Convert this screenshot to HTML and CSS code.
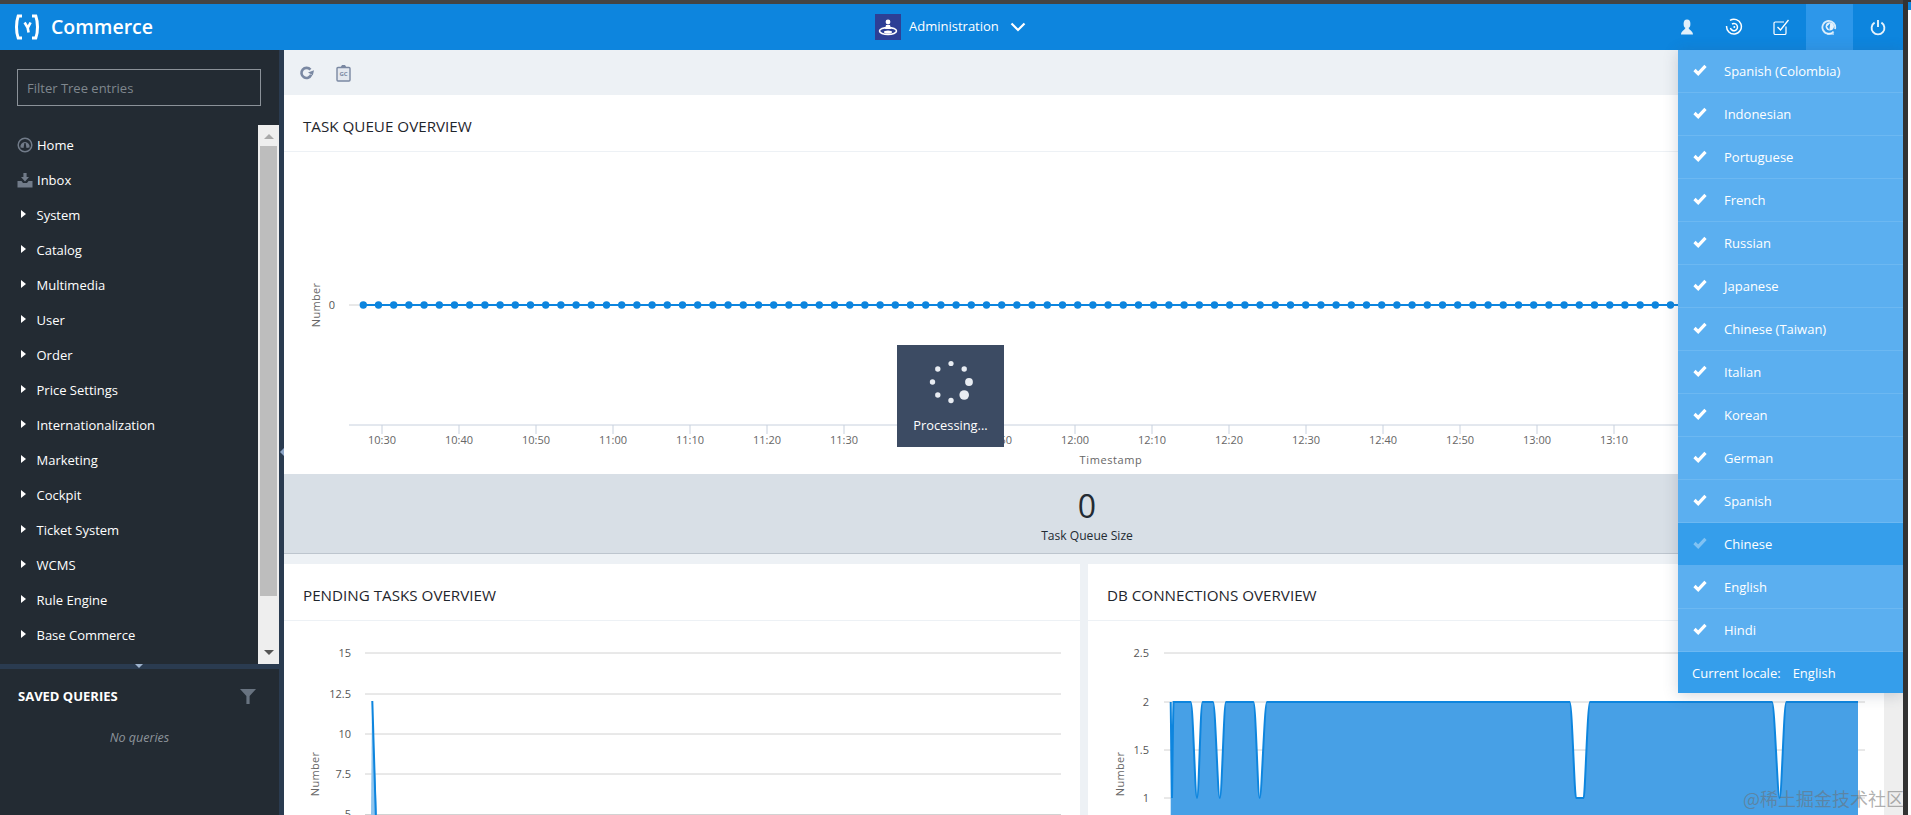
FILE: index.html
```html
<!DOCTYPE html>
<html lang="en">
<head>
<meta charset="utf-8">
<title>Commerce Backoffice</title>
<link rel="stylesheet" href="styles.css">
</head>
<body>
<svg class="defs" width="0" height="0" aria-hidden="true">
  <symbol id="tick" viewBox="0 0 14 12"><path d="M1.5 6 L5.2 9.6 L12.5 1.8" fill="none" stroke="currentColor" stroke-width="3.2"/></symbol>
</svg>
<div class="window">
  <div class="frame-top"></div>
  <header class="header">
    <div class="brand">
      <svg class="logo" width="24" height="26" viewBox="0 0 24 26"><path d="M7 2 H3.2 C1.8 6 1.5 9 1.5 13 C1.5 17 1.8 20.5 3.2 24 H7" fill="none" stroke="#fff" stroke-width="3"/><path d="M17 2 H20.8 C22.2 6 22.5 9 22.5 13 C22.5 17 22.2 20.5 20.8 24 H17" fill="none" stroke="#fff" stroke-width="3"/><path d="M9.6 8.5 L12.6 13.5 L13.6 18.5 M15.6 8.5 L13 13.5" fill="none" stroke="#fff" stroke-width="2.6"/></svg>
      <span class="brand-name">Commerce</span>
    </div>
    <div class="perspective">
      <svg class="persp-icon" width="26" height="26" viewBox="0 0 26 26"><rect width="26" height="26" fill="#2d3f95"/><circle cx="13" cy="8" r="2.4" fill="#fff"/><path d="M11 11 H15 L16 15 H10 Z" fill="#fff"/><ellipse cx="13" cy="17" rx="8.5" ry="3.4" fill="none" stroke="#fff" stroke-width="1.6"/><ellipse cx="13" cy="18" rx="4" ry="1.5" fill="#fff"/></svg>
      <span class="persp-name">Administration</span>
      <svg width="16" height="10" viewBox="0 0 16 10"><path d="M1.5 1.5 L8 8 L14.5 1.5" fill="none" stroke="#fff" stroke-width="2.2"/></svg>
    </div>
    <nav class="head-tools">
      <div class="tool"><svg width="16" height="16" viewBox="0 0 16 16"><ellipse cx="8" cy="5" rx="3.4" ry="4.4" fill="#fff" opacity=".88"/><path d="M2 15.5 C2 12.5 5 11.5 6.5 9 H9.5 C11 11.5 14 12.5 14 15.5 Z" fill="#fff" opacity=".88"/></svg></div>
      <div class="tool"><svg width="18" height="18" viewBox="0 0 18 18"><path d="M5 2.4 A7.4 7.4 0 1 1 1.6 8" fill="none" stroke="#fff" stroke-width="1.5"/><path d="M7 6 A3.6 3.6 0 1 1 5.4 10" fill="none" stroke="#fff" stroke-width="1.5"/><circle cx="9.3" cy="9" r="1" fill="#fff"/></svg></div>
      <div class="tool"><svg width="17" height="17" viewBox="0 0 17 17"><path d="M13 7.5 V14.2 A1.3 1.3 0 0 1 11.7 15.5 H2.3 A1.3 1.3 0 0 1 1 14.2 V4.3 A1.3 1.3 0 0 1 2.3 3 H11" fill="none" stroke="#fff" stroke-width="1.2"/><path d="M4.5 8 L7.5 11 L15.5 1" fill="none" stroke="#fff" stroke-width="1.3"/></svg></div>
      <div class="tool tool-active"><svg width="16" height="16" viewBox="0 0 16 16"><path d="M12.6 12.6 A6.4 6.4 0 1 1 14 10" fill="none" stroke="#fff" stroke-opacity=".82" stroke-width="1.8"/><circle cx="8.8" cy="7.4" r="4.2" fill="#fff" opacity=".88"/><path d="M9.2 4.2 L6 7.6 L8.4 11 Z" fill="#2d97ea"/><path d="M6 15 H13" stroke="#fff" stroke-opacity=".82" stroke-width="1.2"/></svg></div>
      <div class="tool tool-power"><svg width="16" height="17" viewBox="0 0 16 17"><path d="M4.6 3.6 A6.4 6.4 0 1 0 11.4 3.6" fill="none" stroke="#fff" stroke-opacity=".9" stroke-width="1.9"/><path d="M8 1 V8" stroke="#fff" stroke-opacity=".9" stroke-width="1.9"/></svg></div>
    </nav>
  </header>

  <div class="workspace">
    <aside class="sidebar">
      <div class="filter-wrap"><div class="filter-box">Filter Tree entries</div></div>
      <div class="tree-wrap">
        <ul class="tree">
          <li class="tree-item tree-root"><svg class="tree-icon" width="16" height="16" viewBox="0 0 16 16"><circle cx="8" cy="8" r="6.8" fill="none" stroke="#717b89" stroke-width="1.5"/><path d="M3.5 10.5 A4.6 4.6 0 1 1 12.5 10.5 L9.5 11 L8.6 6 H7.4 L6.5 11 Z" fill="#717b89"/></svg>Home</li>
          <li class="tree-item tree-root"><svg class="tree-icon" width="16" height="16" viewBox="0 0 16 16"><path d="M0.5 9 H4.5 L6 11 H10 L11.5 9 H15.5 V15.5 H0.5 Z" fill="#717b89"/><path d="M6.4 1 H9.6 V5 H12 L8 9.5 L4 5 H6.4 Z" fill="#717b89"/></svg>Inbox</li>
          <li class="tree-item"><span class="caret"></span>System</li>
          <li class="tree-item"><span class="caret"></span>Catalog</li>
          <li class="tree-item"><span class="caret"></span>Multimedia</li>
          <li class="tree-item"><span class="caret"></span>User</li>
          <li class="tree-item"><span class="caret"></span>Order</li>
          <li class="tree-item"><span class="caret"></span>Price Settings</li>
          <li class="tree-item"><span class="caret"></span>Internationalization</li>
          <li class="tree-item"><span class="caret"></span>Marketing</li>
          <li class="tree-item"><span class="caret"></span>Cockpit</li>
          <li class="tree-item"><span class="caret"></span>Ticket System</li>
          <li class="tree-item"><span class="caret"></span>WCMS</li>
          <li class="tree-item"><span class="caret"></span>Rule Engine</li>
          <li class="tree-item"><span class="caret"></span>Base Commerce</li>
        </ul>
        <div class="tree-scroll">
          <span class="arrow-up"></span>
          <span class="thumb"></span>
          <span class="arrow-down"></span>
        </div>
      </div>
      <div class="hsplit"><span class="hsplit-grip"></span></div>
      <div class="queries">
        <div class="queries-head">
          <span class="queries-title">SAVED QUERIES</span>
          <svg width="16" height="15" viewBox="0 0 16 15"><path d="M0 0 H16 L9.6 7 V15 H6.4 V7 Z" fill="#687380"/></svg>
        </div>
        <p class="queries-empty">No queries</p>
      </div>
    </aside>
    <div class="vsplit"><span class="vsplit-grip"></span></div>
    <main class="main">
      <div class="content">
        <div class="toolbar">
          <svg width="15" height="15" viewBox="0 0 16 16"><path d="M13 10.5 A5.4 5.4 0 1 1 12.2 5" fill="none" stroke="#7a88a2" stroke-width="2.8"/><path d="M16 5.5 L14.8 10.8 L9.6 8 Z" fill="#7a88a2"/></svg>
          <svg width="15" height="18" viewBox="0 0 15 18"><rect x="1" y="3.5" width="13" height="13.5" rx="1" fill="#e4e8ef" stroke="#7a88a2" stroke-width="1.4"/><path d="M4.5 3.5 L6 1 H9 L10.5 3.5 Z" fill="#7a88a2"/><text x="7.5" y="12.4" class="gc">GC</text></svg>
        </div>

        <section class="card">
          <h2 class="card-title">TASK QUEUE OVERVIEW</h2>
          <svg class="chart chart-top" viewBox="284 152 1600 322" width="1600" height="322">
            <path d="M349 305 H360" class="grid"/>
            <text x="332" y="309" class="tick-y">0</text>
            <text class="axis-name" transform="translate(320 305) rotate(-90)">Number</text>
            <path d="M363 305 H1700" class="series"/>
            <path d="M363.3 305 H1700" class="series-dots"/>
            <path d="M349 425 H1700" class="axis"/>
            <path d="M382 425 v9 M459 425 v9 M536 425 v9 M613 425 v9 M690 425 v9 M767 425 v9 M844 425 v9 M921 425 v9 M998 425 v9 M1075 425 v9 M1152 425 v9 M1229 425 v9 M1306 425 v9 M1383 425 v9 M1460 425 v9 M1537 425 v9 M1614 425 v9" class="axis"/>
            <text y="444" class="tick-x">
              <tspan x="382">10:30</tspan><tspan x="459">10:40</tspan><tspan x="536">10:50</tspan><tspan x="613">11:00</tspan><tspan x="690">11:10</tspan><tspan x="767">11:20</tspan><tspan x="844">11:30</tspan><tspan x="921">11:40</tspan><tspan x="998">11:50</tspan><tspan x="1075">12:00</tspan><tspan x="1152">12:10</tspan><tspan x="1229">12:20</tspan><tspan x="1306">12:30</tspan><tspan x="1383">12:40</tspan><tspan x="1460">12:50</tspan><tspan x="1537">13:00</tspan><tspan x="1614">13:10</tspan>
            </text>
            <text x="1111" y="464" class="axis-name axis-time">Timestamp</text>
          </svg>
          <div class="summary">
            <div class="summary-value">0</div>
            <div class="summary-label">Task Queue Size</div>
          </div>
        </section>

        <div class="card-row">
          <section class="card card-half">
            <h2 class="card-title">PENDING TASKS OVERVIEW</h2>
            <svg class="chart" viewBox="284 621 796 194" width="796" height="194">
              <path d="M365 653 H1061 M365 694 H1061 M365 734 H1061 M365 774 H1061 M365 814.5 H1061" class="grid"/>
              <text y="657" class="tick-y tick-end" x="351">15</text>
              <text y="698" class="tick-y tick-end" x="351">12.5</text>
              <text y="738" class="tick-y tick-end" x="351">10</text>
              <text y="778" class="tick-y tick-end" x="351">7.5</text>
              <text y="818" class="tick-y tick-end" x="351">5</text>
              <text class="axis-name" transform="translate(319 774) rotate(-90)">Number</text>
              <path d="M371 815 L372 701 L377 815 Z" class="area-light"/>
              <path d="M372.3 701 L375.8 815" class="line"/>
            </svg>
          </section>
          <section class="card card-half">
            <h2 class="card-title">DB CONNECTIONS OVERVIEW</h2>
            <svg class="chart" viewBox="1088 621 796 194" width="796" height="194">
              <path d="M1164 653 H1865 M1164 702 H1865 M1164 750 H1865 M1164 798 H1865" class="grid"/>
              <text y="657" class="tick-y tick-end" x="1149">2.5</text>
              <text y="706" class="tick-y tick-end" x="1149">2</text>
              <text y="754" class="tick-y tick-end" x="1149">1.5</text>
              <text y="802" class="tick-y tick-end" x="1149">1</text>
              <text class="axis-name" transform="translate(1124 774) rotate(-90)">Number</text>
              <path class="area" d="M1170.7 815 V702 C1171 720 1171.6 780 1172 798 C1172.4 780 1172.9 712 1173.6 702 H1190.7 C1193 702 1195 798 1197 798 C1199 798 1200.4 702 1202.6 702 H1213 C1215.4 702 1217.6 798 1219.8 798 C1222 798 1223.8 702 1226 702 H1253.4 C1255.8 702 1257.6 798 1259.7 798 C1261.8 798 1264.4 702 1267 702 H1569.7 C1572 702 1574.5 798 1576 798 H1583.7 C1585 798 1587.6 702 1590 702 H1772 C1774.6 702 1777.4 798 1779.6 798 C1781.8 798 1783.8 702 1786.4 702 H1858 V815 Z"/>
              <path class="line" d="M1170.7 702 C1171 720 1171.6 780 1172 798 C1172.4 780 1172.9 712 1173.6 702 H1190.7 C1193 702 1195 798 1197 798 C1199 798 1200.4 702 1202.6 702 H1213 C1215.4 702 1217.6 798 1219.8 798 C1222 798 1223.8 702 1226 702 H1253.4 C1255.8 702 1257.6 798 1259.7 798 C1261.8 798 1264.4 702 1267 702 H1569.7 C1572 702 1574.5 798 1576 798 H1583.7 C1585 798 1587.6 702 1590 702 H1772 C1774.6 702 1777.4 798 1779.6 798 C1781.8 798 1783.8 702 1786.4 702 H1858"/>
            </svg>
          </section>
        </div>
      </div>
      <div class="main-track"></div>
    </main>
  </div>

  <div class="locale-menu">
    <ul class="locale-list">
      <li class="locale-row"><svg class="locale-tick" width="14" height="12"><use href="#tick"/></svg>Spanish (Colombia)</li>
      <li class="locale-row"><svg class="locale-tick" width="14" height="12"><use href="#tick"/></svg>Indonesian</li>
      <li class="locale-row"><svg class="locale-tick" width="14" height="12"><use href="#tick"/></svg>Portuguese</li>
      <li class="locale-row"><svg class="locale-tick" width="14" height="12"><use href="#tick"/></svg>French</li>
      <li class="locale-row"><svg class="locale-tick" width="14" height="12"><use href="#tick"/></svg>Russian</li>
      <li class="locale-row"><svg class="locale-tick" width="14" height="12"><use href="#tick"/></svg>Japanese</li>
      <li class="locale-row"><svg class="locale-tick" width="14" height="12"><use href="#tick"/></svg>Chinese (Taiwan)</li>
      <li class="locale-row"><svg class="locale-tick" width="14" height="12"><use href="#tick"/></svg>Italian</li>
      <li class="locale-row"><svg class="locale-tick" width="14" height="12"><use href="#tick"/></svg>Korean</li>
      <li class="locale-row"><svg class="locale-tick" width="14" height="12"><use href="#tick"/></svg>German</li>
      <li class="locale-row"><svg class="locale-tick" width="14" height="12"><use href="#tick"/></svg>Spanish</li>
      <li class="locale-row locale-current"><svg class="locale-tick" width="14" height="12"><use href="#tick"/></svg>Chinese</li>
      <li class="locale-row"><svg class="locale-tick" width="14" height="12"><use href="#tick"/></svg>English</li>
      <li class="locale-row"><svg class="locale-tick" width="14" height="12"><use href="#tick"/></svg>Hindi</li>
    </ul>
    <div class="locale-foot"><span>Current locale:</span><span>English</span></div>
  </div>

  <div class="processing">
    <svg width="50" height="50" viewBox="0 0 50 50"><g fill="#e8ecf2"><circle cx="25" cy="6.5" r="2.6"/><circle cx="38.2" cy="12" r="2.7"/><circle cx="43" cy="25" r="3.9"/><circle cx="38.2" cy="38" r="4.8"/><circle cx="25" cy="43.5" r="2.7"/><circle cx="11.8" cy="38" r="2.7"/><circle cx="6.5" cy="25" r="2.7"/><circle cx="11.8" cy="12" r="2.7"/></g></svg>
    <span class="processing-text">Processing...</span>
  </div>

  <div class="frame-right"><span class="frame-corner"></span></div>
  <div class="watermark">@稀土掘金技术社区</div>
</div>
</body>
</html>
```

FILE: styles.css
```css
* { box-sizing: border-box; }
html, body { margin: 0; padding: 0; height: 100%; overflow: hidden; background: #fff; }
body { font-family: "Open Sans", "Noto Sans", sans-serif; font-size: 13px; color: #232b33; }
ul { list-style: none; margin: 0; padding: 0; }
.defs { position: absolute; }

.window { position: relative; width: 1911px; height: 815px; display: flex; flex-direction: column; padding-right: 8px; overflow: hidden; }
.frame-top { height: 4px; flex: none; background: #444; }
.frame-right { position: absolute; top: 0; right: 0; width: 8px; height: 815px; background: #fff; border-left: 5px solid #333; }
.frame-corner { position: absolute; top: 0; left: 0; width: 3px; height: 10px; background: #0d85de; border-top: 2px solid #333; }

.header { height: 46px; flex: none; background: #0d85de; display: flex; align-items: center; position: relative; color: #fff; }
.brand { display: flex; align-items: center; padding-left: 15px; width: 875px; }
.brand-name { font-size: 19.5px; font-weight: 600; margin-left: 12px; line-height: 1; }
.perspective { display: flex; align-items: center; }
.persp-icon { margin-right: 8px; }
.persp-name { font-size: 13px; margin-right: 11px; padding-bottom: 2px; }
.head-tools { margin-left: auto; display: flex; height: 46px; }
.tool { width: 47.5px; height: 46px; display: flex; align-items: center; justify-content: center; }
.tool-active { background: #2d97ea; }
.tool-power { width: 50px; }

.workspace { flex: 1; display: flex; min-height: 0; }
.sidebar { width: 279px; flex: none; background: #232b33; display: flex; flex-direction: column; color: #fff; }
.filter-wrap { padding: 19px 18px 19px 17px; height: 75px; }
.filter-box { height: 37px; border: 1px solid #8b9299; color: #7f878e; padding: 0 9px; display: flex; align-items: center; font-size: 13px; }
.tree-wrap { height: 539px; flex: none; display: flex; }
.tree { flex: 1; padding-top: 2px; }
.tree-item { height: 35px; display: flex; align-items: center; padding-left: 36.5px; position: relative; font-size: 13px; color: #fff; }
.tree-root { padding-left: 37px; }
.tree-icon { position: absolute; left: 17px; top: 10px; }
.caret { position: absolute; left: 21px; top: 13px; width: 0; height: 0; border-left: 5px solid #fff; border-top: 4.5px solid transparent; border-bottom: 4.5px solid transparent; }
.tree-scroll { width: 21px; flex: none; background: #eee; display: flex; flex-direction: column; align-items: center; padding-top: 9px; }
.arrow-up { width: 0; height: 0; border-left: 5px solid transparent; border-right: 5px solid transparent; border-bottom: 5px solid #a9a9a9; }
.thumb { width: 17px; height: 450px; background: #bdbdbd; margin-top: 7px; }
.arrow-down { width: 0; height: 0; border-left: 5px solid transparent; border-right: 5px solid transparent; border-top: 5px solid #555; margin-top: 54px; }
.hsplit { height: 5px; flex: none; background: #2a3b50; display: flex; justify-content: center; padding-right: 1px; }
.hsplit-grip { width: 0; height: 0; border-left: 4px solid transparent; border-right: 4px solid transparent; border-top: 4px solid #9db2cc; }
.queries { flex: 1; }
.queries-head { display: flex; align-items: center; justify-content: space-between; padding: 18px 23px 0 18px; }
.queries-title { font-size: 13px; font-weight: 700; color: #fff; }
.queries-empty { margin: 24px 0 0; text-align: center; font-style: italic; font-size: 12.5px; color: #8d949b; }

.vsplit { width: 5px; flex: none; background: #2a3b50; position: relative; }
.vsplit-grip { position: absolute; left: 1px; top: 398px; width: 0; height: 0; border-top: 4px solid transparent; border-bottom: 4px solid transparent; border-right: 4px solid #8da6c7; }

.main { flex: 1; min-width: 0; display: flex; background: #edf1f5; }
.content { width: 1600px; flex: none; overflow: hidden; }
.main-track { flex: 1; background: #eee; }
.toolbar { height: 45px; background: #edf1f5; display: flex; align-items: center; gap: 22px; padding-left: 15px; }
.gc { font-size: 6px; font-weight: 700; fill: #7a88a2; text-anchor: middle; font-family: "Open Sans", sans-serif; }

.card { background: #fff; }
.card-title { margin: 0; height: 57px; display: flex; align-items: center; padding: 6px 0 0 19px; font-size: 15.2px; font-weight: 400; color: #1f262d; border-bottom: 1px solid #edf1f5; }
.chart { display: block; overflow: hidden; }
.grid { stroke: #d2d2d2; stroke-width: 1; fill: none; }
.axis { stroke: #c8d1de; stroke-width: 1; fill: none; }
.series { stroke: #0d85de; stroke-width: 2; fill: none; }
.series-dots { stroke: #0d85de; stroke-width: 7.4; stroke-linecap: round; stroke-dasharray: 0 15.2; fill: none; }
.line { stroke: #0d85de; stroke-width: 2; fill: none; }
.area { fill: #47a0e6; }
.area-light { fill: #8dc4ee; }
.tick-y { font-size: 11px; fill: #555; text-anchor: middle; }
.tick-end { text-anchor: end; }
.tick-x { font-size: 11px; fill: #666; text-anchor: middle; }
.axis-name { font-size: 11px; fill: #666; text-anchor: middle; letter-spacing: .3px; }
.axis-time { letter-spacing: .6px; }
.summary { height: 80px; background: #d8dfe6; border-bottom: 1px solid #bdc5ce; text-align: center; padding: 10px 0 0 6px; }
.summary-value { font-size: 32px; font-weight: 500; line-height: 44px; color: #232b33; }
.summary-label { font-size: 12.1px; line-height: 17px; color: #232b33; margin-top: -1px; }

.card-row { display: grid; grid-template-columns: 796px 796px; gap: 8px; margin-top: 10px; }

.locale-menu { position: absolute; left: 1678px; top: 50px; width: 225px; background: #5baff0; box-shadow: 0 2px 14px rgba(60, 75, 100, .22); color: #fff; }
.locale-row { height: 43px; padding-left: 46px; display: flex; align-items: center; position: relative; border-bottom: 1px solid #6cb8f2; font-size: 13px; }
.locale-tick { position: absolute; left: 15px; top: 14px; color: #fff; }
.locale-current { background: #359eeb; border-bottom-color: #5baff0; }
.locale-current .locale-tick { color: #80c2f3; }
.locale-foot { height: 41px; background: #359eeb; display: flex; align-items: center; gap: 12px; padding-left: 14px; font-size: 13px; }

.processing { position: absolute; left: 897px; top: 345px; width: 107px; height: 102px; background: #3c4b63; color: #fff; display: flex; flex-direction: column; align-items: center; padding-top: 12px; }
.processing-text { font-size: 12.8px; margin-top: 9px; }

.watermark { position: absolute; left: 1743px; top: 786px; font-family: "Noto Sans CJK SC", sans-serif; font-size: 18px; line-height: 24px; color: rgba(110, 110, 110, .55); white-space: nowrap; }
```
